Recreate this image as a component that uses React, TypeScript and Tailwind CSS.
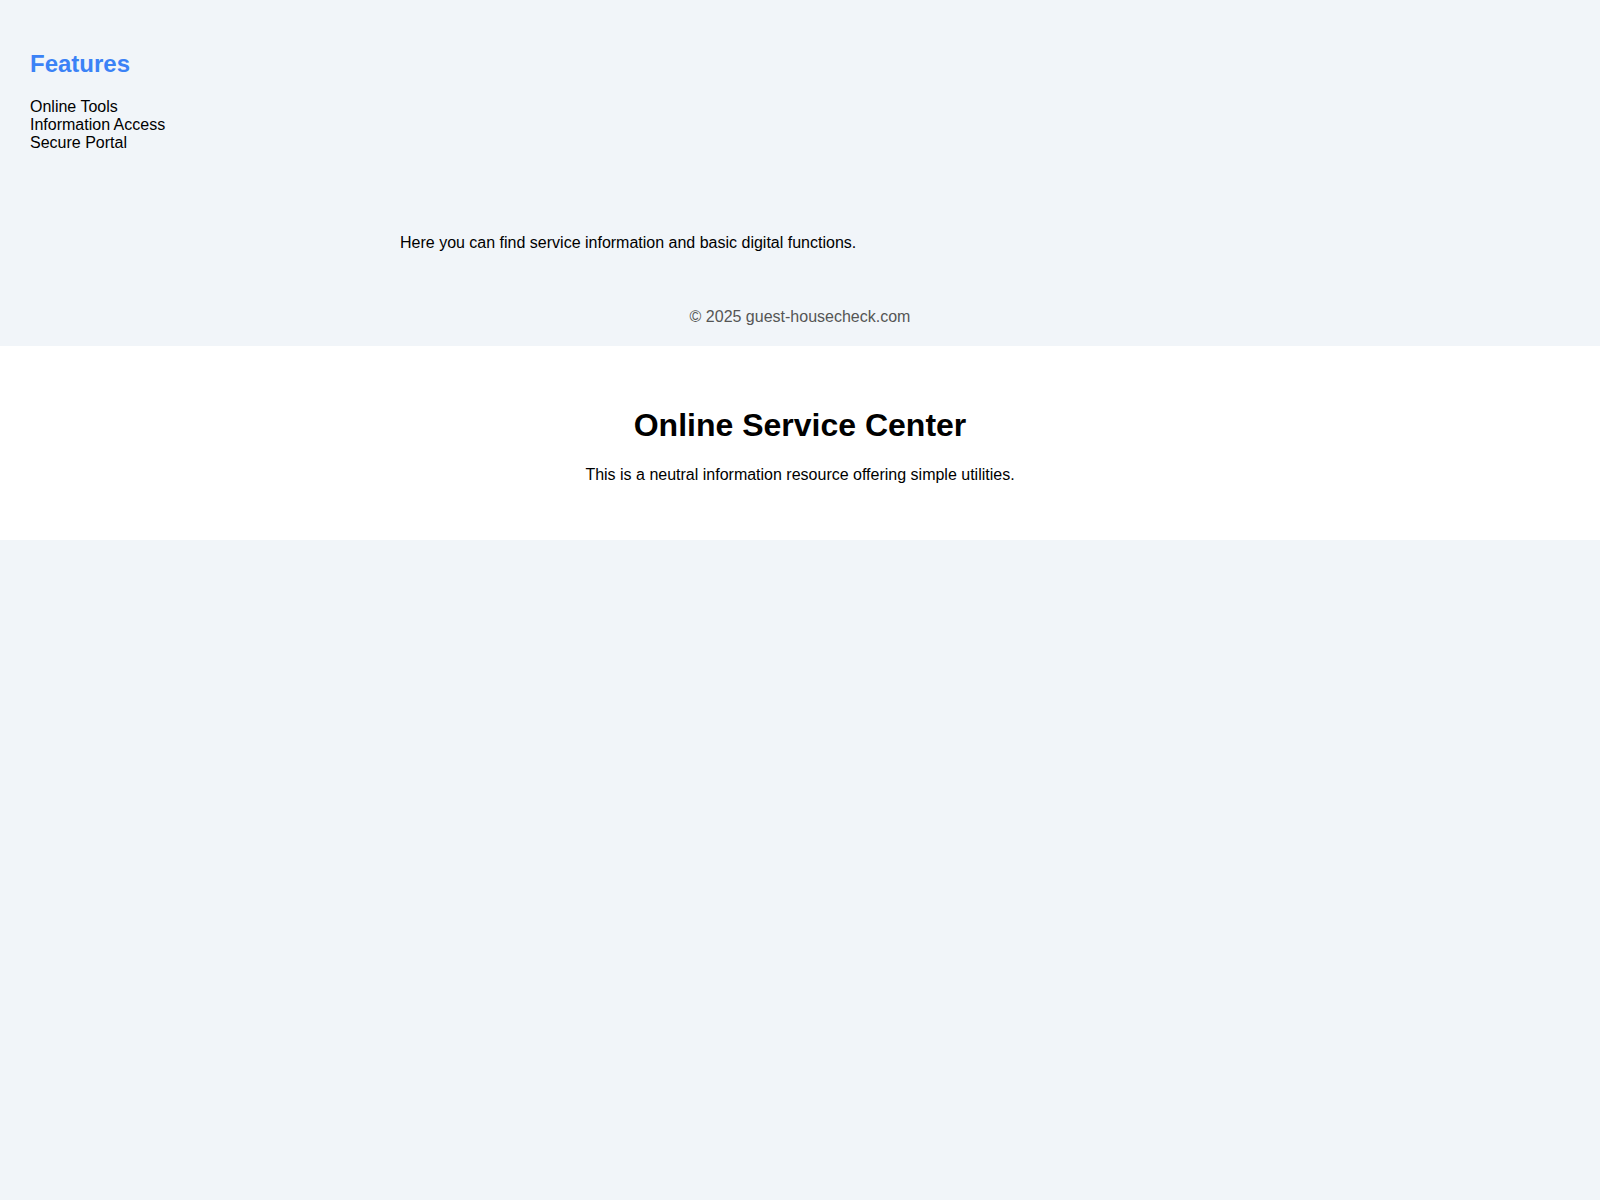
const FEATURES = ["Online Tools", "Information Access", "Secure Portal"]

export default function App() {
  return (
    <div className="min-h-[1200px] bg-[#f1f5f9] text-black font-['Liberation_Sans',Arial,sans-serif]">
      <div className="px-[30px] pt-[50px]">
        <h2 className="text-[24px] leading-[28px] font-bold text-[#3b82f6]">Features</h2>
        <ul className="mt-[20px] text-[16px] leading-[18px]">
          {FEATURES.map((f) => (
            <li key={f}>{f}</li>
          ))}
        </ul>
      </div>

      <main className="mx-auto mt-[82px] max-w-[800px]">
        <p className="text-[16px] leading-[18px]">Here you can find service information and basic digital functions.</p>
      </main>

      <footer className="mt-[56px] pb-[20px] text-center text-[16px] leading-[18px] text-[#555555]">
        © 2025 guest-housecheck.com
      </footer>

      <header className="bg-white pt-[61px] pb-[56px] text-center">
        <h1 className="text-[32px] leading-[37px] font-bold">Online Service Center</h1>
        <p className="mt-[22px] text-[16px] leading-[18px]">This is a neutral information resource offering simple utilities.</p>
      </header>
    </div>
  )
}
